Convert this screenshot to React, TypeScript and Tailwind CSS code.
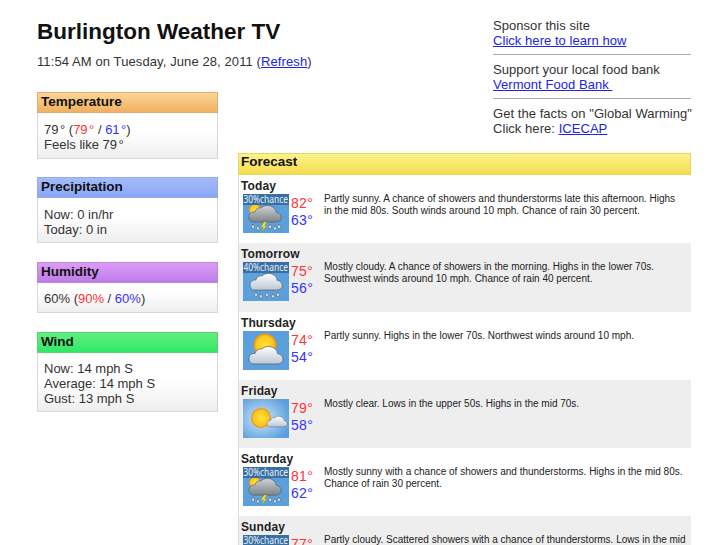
import React from "react";

const R = ({ children }: { children: React.ReactNode }) => <span className="text-[#ff3333]">{children}</span>;
const B = ({ children }: { children: React.ReactNode }) => <span className="text-[#3333ff]">{children}</span>;
const L = ({ children }: { children: React.ReactNode }) => <a className="text-[#2222ee] underline">{children}</a>;
const D = () => <span className="ml-[1.5px]">°</span>;

function Cloud({ x, y, s, fill, id }: { x: number; y: number; s: number; fill: string; id: string }) {
  return (
    <g transform={`translate(${x} ${y}) scale(${s})`}>
      <defs>
        <linearGradient id={id} x1="0" y1="0" x2="0" y2="1">
          <stop offset="0" stopColor={fill === "dark" ? "#cfd3d7" : "#ffffff"} />
          <stop offset="1" stopColor={fill === "dark" ? "#7d8387" : "#bcc6d2"} />
        </linearGradient>
      </defs>
      <path
        d="M5 18C1 18 0 15 0 12.5C0 9.5 2.5 7 6 7.5C7 4 10 2.5 13 3C15 .5 20 -.5 24 1.5C27 3 28.5 5 28.5 7.5C32 8 34 10.5 34 13.5C34 16.5 31 18 28 18Z"
        fill={`url(#${id})`}
        stroke="#4f5a66"
        strokeWidth="0.7"
      />
    </g>
  );
}

function Sun({ cx, cy, r, id }: { cx: number; cy: number; r: number; id: string }) {
  return (
    <g>
      <defs>
        <radialGradient id={id}>
          <stop offset="0" stopColor="#ffe23a" />
          <stop offset="0.75" stopColor="#ffc81e" />
          <stop offset="1" stopColor="#e88a10" />
        </radialGradient>
      </defs>
      <circle cx={cx} cy={cy} r={r} fill={`url(#${id})`} />
    </g>
  );
}

function Drops({ y, xs }: { y: number; xs: number[] }) {
  return (
    <g fill="#e8eef4" stroke="#3d4a58" strokeWidth="0.5">
      {xs.map((x, i) => (
        <path key={i} d={`M${x} ${y + (i % 2) * 1.5}l1.3 2.6a1.4 1.4 0 1 1-2.6 0z`} />
      ))}
    </g>
  );
}

function WeatherIcon({ kind, chance, id }: { kind: string; chance?: string; id: string }) {
  return (
    <svg width="46" height="39" viewBox="0 0 46 39" className="ml-[2px] block shrink-0">
      <defs>
        <radialGradient id={`${id}bg`} cx="0.4" cy="0.5" r="0.65">
          <stop offset="0" stopColor={kind === "sunny" ? "#cfe8fa" : "#5fa3de"} />
          <stop offset="1" stopColor="#5a9edb" />
        </radialGradient>
      </defs>
      <rect width="46" height="39" fill={`url(#${id}bg)`} />
      {kind === "storm" && (
        <>
          <Sun cx={12} cy={16} r={6} id={`${id}s`} />
          <Cloud x={6} y={11} s={0.95} fill="dark" id={`${id}c`} />
          <Drops y={30} xs={[10, 15, 27, 32, 36]} />
          <path d="M21 28l-3 5h2.5l-2.5 5 6-6.5h-2.5l2.5-3.5z" fill="#f6e22a" stroke="#8a7a10" strokeWidth="0.3" />
        </>
      )}
      {kind === "rain" && (
        <>
          <Cloud x={7} y={11} s={0.95} fill="light" id={`${id}c`} />
          <Drops y={30} xs={[13, 18, 24, 30, 35]} />
        </>
      )}
      {kind === "partly" && (
        <>
          <Sun cx={22} cy={14} r={11.5} id={`${id}s`} />
          <Cloud x={6} y={15} s={1} fill="light" id={`${id}c`} />
        </>
      )}
      {kind === "sunny" && (
        <>
          <Sun cx={18} cy={19} r={10} id={`${id}s`} />
          <Cloud x={24} y={17} s={0.6} fill="light" id={`${id}c`} />
        </>
      )}
      {chance && (
        <>
          <rect width="46" height="11" fill="#3a6fa4" />
          <text
            transform="translate(0.5 9) scale(0.84 1)"
            fill="#e8f0f8"
            fontSize="10"
            fontFamily="'Noto Sans', sans-serif"
          >
            {chance}%chance
          </text>
        </>
      )}
    </svg>
  );
}

function Box({
  title,
  head,
  border,
  body,
  cls,
  children,
}: {
  title: string;
  head: string;
  border: string;
  body: string;
  cls: string;
  children: React.ReactNode;
}) {
  return (
    <section className={`border border-[#d8d8d8] border-t-0 bg-gradient-to-b from-white from-60% to-[#eeeeee] ${cls}`}>
      <h2 className={`h-[21px] -mx-px border px-[3px] text-[13.5px] font-bold leading-[17px] text-[#111111] ${head} ${border}`}>
        {title}
      </h2>
      <div className={`px-[6px] text-[13px] leading-[15px] text-[#333333] ${body}`}>{children}</div>
    </section>
  );
}

const days = [
  { name: "Today", kind: "storm", chance: "30", hi: 82, lo: 63, text: "Partly sunny. A chance of showers and thunderstorms late this afternoon. Highs\nin the mid 80s. South winds around 10 mph. Chance of rain 30 percent." },
  { name: "Tomorrow", kind: "rain", chance: "40", hi: 75, lo: 56, text: "Mostly cloudy. A chance of showers in the morning. Highs in the lower 70s. Southwest winds around 10 mph. Chance of rain 40 percent." },
  { name: "Thursday", kind: "partly", hi: 74, lo: 54, text: "Partly sunny. Highs in the lower 70s. Northwest winds around 10 mph." },
  { name: "Friday", kind: "sunny", hi: 79, lo: 58, text: "Mostly clear. Lows in the upper 50s. Highs in the mid 70s." },
  { name: "Saturday", kind: "storm", chance: "30", hi: 81, lo: 62, text: "Mostly sunny with a chance of showers and thunderstorms. Highs in the mid 80s. Chance of rain 30 percent." },
  { name: "Sunday", kind: "storm", chance: "30", hi: 77, lo: 60, text: "Partly cloudy. Scattered showers with a chance of thunderstorms. Lows in the mid 60s. Highs in the upper 70s." },
];

export default function App() {
  return (
    <div className="flex h-[545px] w-[727px] gap-[20px] overflow-hidden bg-white pl-[37px] font-['Liberation_Sans',Arial,sans-serif]">
      <div className="w-[181px] shrink-0 pt-[18px]">
        <h1 className="whitespace-nowrap text-[22.5px] font-bold leading-[27px] text-[#111111]">Burlington Weather TV</h1>
        <p className="mt-[9px] whitespace-nowrap text-[13px] leading-[15px] tracking-[0.1px] text-[#333333]">
          11:54 AM on Tuesday, June 28, 2011 (<L>Refresh</L>)
        </p>
        <div className="flex flex-col">
          <Box cls="mt-[23px]" title="Temperature" head="bg-gradient-to-b from-[#fbd596] to-[#f0b060]" border="border-[#dcae74]" body="pt-[9px] pb-[6px]">
            79<D /> (<R>79<D /></R> / <B>61<D /></B>)<br />Feels like 79<D />
          </Box>
          <Box cls="mt-[18px]" title="Precipitation" head="bg-gradient-to-b from-[#a5bcfb] to-[#8aa6f6]" border="border-[#95abe8]" body="pt-[9px] pb-[5px]">
            Now: 0 in/hr<br />Today: 0 in
          </Box>
          <Box cls="mt-[19px]" title="Humidity" head="bg-gradient-to-b from-[#dc9cf4] to-[#bd7cea]" border="border-[#bb86dd]" body="pt-[8px] pb-[6px]">
            60% (<R>90%</R> / <B>60%</B>)
          </Box>
          <Box cls="mt-[19px]" title="Wind" head="bg-gradient-to-b from-[#5ef07e] to-[#2ee868]" border="border-[#5ccf70]" body="pt-[8px] pb-[5px]">
            Now: 14 mph S<br />Average: 14 mph S<br />Gust: 13 mph S
          </Box>
        </div>
      </div>
      <div className="w-[453px] shrink-0 pt-[18px]">
        <div className="ml-[255px] w-[198px] whitespace-nowrap text-[13px] leading-[15px] tracking-[0.05px] text-[#333333]">
          <p>Sponsor this site</p>
          <L>Click here to learn how</L>
          <hr className="my-[6px] border-t border-[#aaaaaa]" />
          <p className="pt-[1px]">Support your local food bank</p>
          <L>Vermont Food Bank&nbsp;</L>
          <hr className="my-[6px] border-t border-[#aaaaaa]" />
          <p className="pt-[1px]">Get the facts on "Global Warming"</p>
          <p>
            Click here: <L>ICECAP</L>
          </p>
        </div>
        <section className="mt-[17px] border-l border-[#dddddd]">
          <h2 className="-ml-px h-[22px] border border-[#e0d860] bg-gradient-to-b from-[#fdf28a] to-[#f5dc4c] px-[2px] text-[13.5px] font-bold leading-[15px] text-[#111111]">
            Forecast
          </h2>
          {days.map((d, i) => (
            <div key={d.name} className={`h-[68.3px] pl-[2px] pt-[4px] ${i % 2 ? "bg-[#eeeeee]" : "bg-white"}`}>
              <div className="text-[12px] font-bold leading-[15px] tracking-[0.1px] text-[#222222]">{d.name}</div>
              <div className="flex">
                <WeatherIcon kind={d.kind} chance={d.chance} id={`i${i}`} />
                <div className="w-[35px] shrink-0 pl-[2px] pt-[1px] text-[14px] leading-[17px] tracking-[0.3px]">
                  <div className="text-[#ff3333]">{d.hi}°</div>
                  <div className="text-[#3333ff]">{d.lo}°</div>
                </div>
                <p className="-mt-[1px] whitespace-pre-line text-[10px] leading-[12px] text-[#222222]">{d.text}</p>
              </div>
            </div>
          ))}
        </section>
      </div>
    </div>
  );
}
